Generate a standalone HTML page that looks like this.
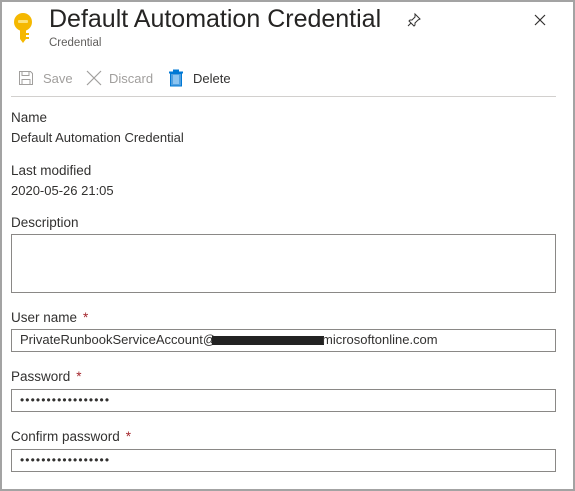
<!DOCTYPE html><html><head><style>
body{margin:0;width:575px;height:491px;overflow:hidden;font-family:"Liberation Sans",sans-serif;color:#323130;background:#fff}
.frame{position:absolute;left:0;top:0;width:571px;height:487px;border:2px solid #a3a3a3;}
.a{position:absolute;white-space:nowrap}
.lbl{font-size:13.5px;color:#323130}
.val{font-size:13px;color:#323130}
.box{position:absolute;left:11px;width:545px;box-sizing:border-box;border:1px solid #8a8886;background:#fff}
.req{color:#a4262c;margin-left:6px}
.inp{font-size:13px;padding-left:8px;line-height:20px}
.pw{font-size:12px;letter-spacing:1.1px}
</style></head><body>
<div class="frame"></div>
<svg class="a" style="left:12px;top:12px" width="22" height="32" viewBox="0 0 22 32">
<circle cx="11" cy="10" r="9" fill="#f5b800"/><rect x="6" y="8" width="10" height="3" rx="1" fill="#fce27a"/>
<path d="M8 17h6v10l-3 4-3-4z" fill="#f5b800"/><rect x="14" y="21" width="3" height="2" fill="#f5b800"/><rect x="14" y="25" width="3" height="2" fill="#f5b800"/></svg>
<div class="a" style="left:49px;top:5px;font-size:25px;color:#252423">Default Automation Credential</div>
<div class="a" style="left:49px;top:37px;font-size:11.5px;color:#605e5c">Credential</div>
<svg class="a" style="left:406px;top:12px" width="16" height="16" viewBox="0 0 16 16" fill="none" stroke="#323130" stroke-width="1"><path d="M9 2l5 5-2 1-3 3 0 2-1 1-5-5 1-1 2 0 3-3zM5 11l-3 3"/></svg>
<svg class="a" style="left:534px;top:14px" width="12" height="12" viewBox="0 0 12 12" stroke="#323130" stroke-width="1.2"><path d="M1 1l10 10M11 1L1 11"/></svg>
<svg class="a" style="left:18px;top:70px" width="16" height="16" viewBox="0 0 16 16" fill="none" stroke="#a19f9d"><path d="M1.5 1.5h11l2 2v11h-13z M4 1.5v4h7v-4 M4 14.5v-5h8v5"/></svg>
<div class="a" style="left:43px;top:71px;font-size:13px;color:#a19f9d">Save</div>
<svg class="a" style="left:86px;top:70px" width="16" height="16" viewBox="0 0 16 16" stroke="#a19f9d" stroke-width="1.2"><path d="M1 1l14 14M15 1L1 15"/></svg>
<div class="a" style="left:109px;top:71px;font-size:13px;color:#a19f9d">Discard</div>
<svg class="a" style="left:169px;top:69px" width="14" height="18" viewBox="0 0 14 18"><rect x="4" y="0.5" width="6" height="2" fill="#0078d4"/><rect x="0" y="2.5" width="14" height="2" fill="#0078d4"/><rect x="1.5" y="4.5" width="11" height="12.5" fill="#50a0e0" stroke="#0078d4"/><rect x="4" y="6" width="6" height="9" fill="#8cc4f0"/></svg>
<div class="a" style="left:193px;top:71px;font-size:13px;color:#323130">Delete</div>
<div class="a" style="left:11px;top:96px;width:545px;height:1px;background:#d2d0ce"></div>
<div class="a lbl" style="left:11px;top:110px">Name</div>
<div class="a val" style="left:11px;top:130px">Default Automation Credential</div>
<div class="a lbl" style="left:11px;top:163px">Last modified</div>
<div class="a val" style="left:11px;top:183px">2020-05-26 21:05</div>
<div class="a lbl" style="left:11px;top:215px">Description</div>
<div class="box" style="top:234px;height:59px"></div>
<div class="a lbl" style="left:11px;top:310px">User name<span class="req">*</span></div>
<div class="box inp" style="top:329px;height:23px">PrivateRunbookServiceAccount@<span style="display:inline-block;width:112px;height:9px;background:#222;vertical-align:middle;margin-left:-4px;margin-right:-2px"></span>microsoftonline.com</div>
<div class="a lbl" style="left:11px;top:369px">Password<span class="req">*</span></div>
<div class="box inp pw" style="top:389px;height:23px">•••••••••••••••••</div>
<div class="a lbl" style="left:11px;top:429px">Confirm password<span class="req">*</span></div>
<div class="box inp pw" style="top:449px;height:23px">•••••••••••••••••</div>
</body></html>
